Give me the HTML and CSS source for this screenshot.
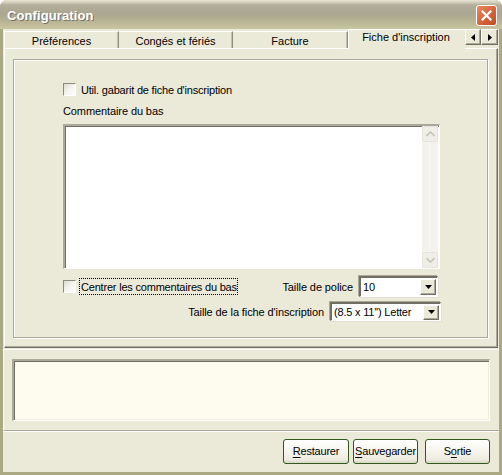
FILE: index.html
```html
<!DOCTYPE html>
<html>
	<head>
		<meta charset="utf-8">
		<title>Configuration</title>
		<link rel="stylesheet" href="styles.css">
	</head>
	<body>
		<div class="window">
			<div class="titlebar">
				<span class="title">Configuration</span>
				<span class="close">
					<svg width="11" height="11" viewBox="0 0 11 11"><path d="M1.5 1.5l8 8M9.5 1.5l-8 8" stroke="#fff" stroke-width="2.2" stroke-linecap="square"/></svg>
				</span>
			</div>
			<div class="client">
				<div class="tabs">
					<div class="tab t1">Préférences</div>
					<div class="tab t2">Congés et fériés</div>
					<div class="tab t3">Facture</div>
					<div class="tab sel">Fiche d'inscription</div>
					<div class="arrow_btn"><svg width="4" height="7" viewBox="0 0 4 7"><path d="M4 0v7L0 3.5z" fill="#000"/></svg></div>
					<div class="arrow_btn wide"><svg width="4" height="7" viewBox="0 0 4 7"><path d="M0 0v7l4-3.5z" fill="#000"/></svg></div>
				</div>
				<div class="panel">
					<div class="frame">
						<div class="form">
							<div class="check_row">
								<span class="checkbox"></span>
								<span class="check_label">Util. gabarit de fiche d'inscription</span>
							</div>
							<div class="field_label">Commentaire du bas</div>
							<div class="memo">
								<div class="memo_text"></div>
								<div class="scrollbar">
									<div class="sb_btn"><svg width="9" height="6" viewBox="0 0 9 6"><path d="M0.5 5l4-4 4 4" fill="none" stroke="#c4c3b8" stroke-width="1.6"/></svg></div>
									<div class="sb_track"></div>
									<div class="sb_btn"><svg width="9" height="6" viewBox="0 0 9 6"><path d="M0.5 1l4 4 4-4" fill="none" stroke="#c4c3b8" stroke-width="1.6"/></svg></div>
								</div>
							</div>
							<div class="row_police">
								<div class="check_row">
									<span class="checkbox"></span>
									<span class="check_label focus">Centrer les commentaires du bas</span>
								</div>
								<div class="combo_group">
									<span class="combo_label">Taille de police</span>
									<div class="combo police">
										<span class="combo_value">10</span>
										<span class="drop_btn"><svg width="7" height="4" viewBox="0 0 7 4"><path d="M0 0h7L3.5 4z" fill="#000"/></svg></span>
									</div>
								</div>
							</div>
							<div class="row_fiche">
								<span class="combo_label">Taille de la fiche d'inscription</span>
								<div class="combo fiche">
									<span class="combo_value">(8.5 x 11'') Letter</span>
									<span class="drop_btn"><svg width="7" height="4" viewBox="0 0 7 4"><path d="M0 0h7L3.5 4z" fill="#000"/></svg></span>
								</div>
							</div>
						</div>
					</div>
				</div>
				<div class="notes">
					<div class="notes_box"></div>
				</div>
				<div class="buttons">
					<div class="btn b1"><u>R</u>estaurer</div>
					<div class="btn b2"><u>S</u>auvegarder</div>
					<div class="btn b3">S<u>o</u>rtie</div>
				</div>
			</div>
		</div>
	</body>
</html>
```
FILE: styles.css
```css
body {
	margin: 0;
	background-color: #fff;
	font-family: "Liberation Sans", Arial, sans-serif;
	font-size: 11px;
	color: #000;
}

.window {
	width: 502px;
	height: 475px;
	box-sizing: border-box;
	display: flex;
	flex-direction: column;
	background-color: #aba983;
	border-radius: 7px 7px 0 0;
	overflow: hidden;
}

.titlebar {
	height: 29px;
	flex: none;
	display: flex;
	align-items: center;
	justify-content: space-between;
	padding: 0 5px 0 7px;
	box-sizing: border-box;
	background: linear-gradient(to bottom, #e9e6d4 0, #d6d2bf 2px, #b3ae9a 5px, #aba690 14px, #b7b394 21px, #c6c39f 28px);
}

.title {
	font-size: 13px;
	font-weight: bold;
	color: #fff;
	text-shadow: 1px 1px 0 #77735f;
	letter-spacing: 0.1px;
	margin-top: 1px;
}

.close {
	width: 19px;
	height: 19px;
	border: 1px solid #fff;
	border-radius: 3px;
	background: linear-gradient(135deg, #e68a62 0, #d5623a 55%, #c04c28 100%);
	display: flex;
	align-items: center;
	justify-content: center;
	margin-top: 2px;
}

.client {
	flex: 1;
	margin: 0 3px 3px 3px;
	background-color: #ebe9d8;
	display: flex;
	flex-direction: column;
}

/* onglets */
.tabs {
	height: 19px;
	display: flex;
	align-items: flex-end;
	padding-left: 1px;
	position: relative;
	z-index: 1;
}

.tab {
	height: 17px;
	box-sizing: border-box;
	border-top: 1px solid #fff;
	border-left: 1px solid #fff;
	border-right: 1px solid #8e8c80;
	box-shadow: inset -1px 0 0 #c4c2b2;
	text-align: center;
	line-height: 18px;
	background-color: #ebe9d8;
}

.t1 {
	width: 115px;
}

.t2 {
	width: 114px;
	border-left: none;
}

.t3 {
	width: 115px;
	border-left: none;
}

.tab.sel {
	width: 117px;
	height: 20px;
	margin-bottom: -1px;
	border-right: none;
	box-shadow: none;
	line-height: 15px;
	padding-right: 2px;
}

.arrow_btn {
	align-self: flex-start;
	width: 16px;
	height: 16px;
	box-sizing: border-box;
	border-top: 1px solid #fff;
	border-left: 1px solid #fff;
	border-right: 1px solid #716f64;
	border-bottom: 1px solid #716f64;
	box-shadow: inset -1px -1px 0 #aca899;
	display: flex;
	align-items: center;
	justify-content: center;
	background-color: #ebe9d8;
}

.arrow_btn.wide {
	width: 17px;
}

/* panneau */
.panel {
	height: 300px;
	margin: 0 1px;
	box-sizing: border-box;
	border-top: 1px solid #fff;
	border-left: 1px solid #fff;
	border-right: 1px solid #716f64;
	border-bottom: 1px solid #716f64;
	box-shadow: inset -1px -1px 0 #aca899;
	padding: 10px 0 0 8px;
}

.frame {
	width: 475px;
	height: 279px;
	border: 1px solid #aca899;
	box-shadow: 1px 1px 0 #fff, inset 1px 1px 0 #fff;
	padding: 23px 0 0 48px;
	box-sizing: border-box;
}

.form {
	width: 376px;
	display: flex;
	flex-direction: column;
	padding-left: 1px;
}

.check_row {
	display: flex;
	align-items: center;
	height: 13px;
}

.checkbox {
	width: 13px;
	height: 13px;
	box-sizing: border-box;
	border-top: 1px solid #8d8b80;
	border-left: 1px solid #8d8b80;
	border-right: 1px solid #fff;
	border-bottom: 1px solid #fff;
	background: linear-gradient(135deg, #dcdbd0 0, #f5f4ee 50%, #fff 100%);
	flex: none;
}

.check_label {
	margin-left: 5px;
	white-space: nowrap;
	letter-spacing: -0.2px;
	line-height: 14px;
	padding-top: 1px;
}

.check_label.focus {
	margin-left: 4px;
	padding: 1px 0 0 1px;
	outline: 1px dotted #000;
	outline-offset: 0;
}

.field_label {
	margin-top: 9px;
	line-height: 13px;
	letter-spacing: -0.1px;
}

.memo {
	margin-top: 6px;
	height: 145px;
	box-sizing: border-box;
	border-top: 2px solid #aca899;
	border-left: 2px solid #aca899;
	border-right: 1px solid #fff;
	border-bottom: 1px solid #fff;
	box-shadow: inset 1px 1px 0 #716f64;
	display: flex;
	background-color: #fff;
	margin-right: -1px;
}

.memo_text {
	flex: 1;
}

.scrollbar {
	width: 16px;
	display: flex;
	flex-direction: column;
	background-color: #f3f2ec;
	margin-right: 1px;
}

.sb_btn {
	height: 16px;
	box-sizing: border-box;
	border: 1px solid #e6e4da;
	border-radius: 2px;
	background-color: #efeee8;
	display: flex;
	align-items: center;
	justify-content: center;
}

.sb_track {
	flex: 1;
	margin: 0 2px 0 7px;
	border-left: 1px solid #fdf8e8;
}

.row_police {
	margin-top: 7px;
	display: flex;
	align-items: center;
	justify-content: space-between;
}

.combo_group {
	display: flex;
	align-items: center;
}

.combo_label {
	margin-right: 6px;
	white-space: nowrap;
	letter-spacing: -0.1px;
}

.combo {
	display: flex;
	align-items: center;
	box-sizing: border-box;
	border-top: 2px solid #716f64;
	border-left: 2px solid #716f64;
	border-right: 1px solid #fff;
	border-bottom: 1px solid #fff;
	box-shadow: 1px 1px 0 #e2e0d0, -1px -1px 0 #aca899;
	background-color: #fff;
	padding: 0 1px 0 2px;
}

.combo.police {
	width: 79px;
	height: 21px;
	margin-right: 1px;
}

.combo.fiche {
	width: 111px;
	height: 19px;
	margin-right: 0;
}

.combo_value {
	flex: 1;
	white-space: nowrap;
	letter-spacing: -0.2px;
}

.drop_btn {
	width: 16px;
	height: 16px;
	box-sizing: border-box;
	border-top: 1px solid #fff;
	border-left: 1px solid #fff;
	border-right: 1px solid #716f64;
	border-bottom: 1px solid #716f64;
	box-shadow: inset -1px -1px 0 #aca899;
	background-color: #ebe9d8;
	display: flex;
	align-items: center;
	justify-content: center;
}

.combo.fiche .drop_btn {
	height: 15px;
}

.row_fiche {
	margin-top: 5px;
	display: flex;
	align-items: center;
	justify-content: flex-end;
	margin-right: -2px;
}

/* zone du bas */
.notes {
	margin-top: 1px;
	height: 82px;
	box-sizing: border-box;
	border-top: 1px solid #fff;
	border-left: 1px solid #fff;
	border-bottom: 1px solid #aca899;
	padding: 9px 0 0 8px;
}

.notes_box {
	width: 478px;
	height: 62px;
	box-sizing: border-box;
	border-top: 2px solid #aca899;
	border-left: 2px solid #aca899;
	border-right: 1px solid #fff;
	border-bottom: 1px solid #fff;
	box-shadow: inset 1px 1px 0 #716f64, inset -1px -1px 0 #f1efe2;
	background-color: #fefbef;
}

.buttons {
	flex: 1;
	border-top: 1px solid #fff;
	display: flex;
	justify-content: flex-end;
	align-items: flex-start;
	padding: 7px 9px 0 0;
}

.btn {
	height: 25px;
	box-sizing: border-box;
	border: 1px solid #2f5a1c;
	border-radius: 3px;
	background: linear-gradient(to bottom, #fff 0, #f8f7f0 40%, #edebe0 85%, #d8d5c5 100%);
	text-align: center;
	line-height: 22px;
	letter-spacing: -0.2px;
}

.btn u {
	text-decoration-thickness: 1px;
	text-underline-offset: 2px;
}

.b1 {
	width: 66px;
}

.b2 {
	width: 65px;
	margin-left: 4px;
}

.b3 {
	width: 65px;
	margin-left: 7px;
}
```
